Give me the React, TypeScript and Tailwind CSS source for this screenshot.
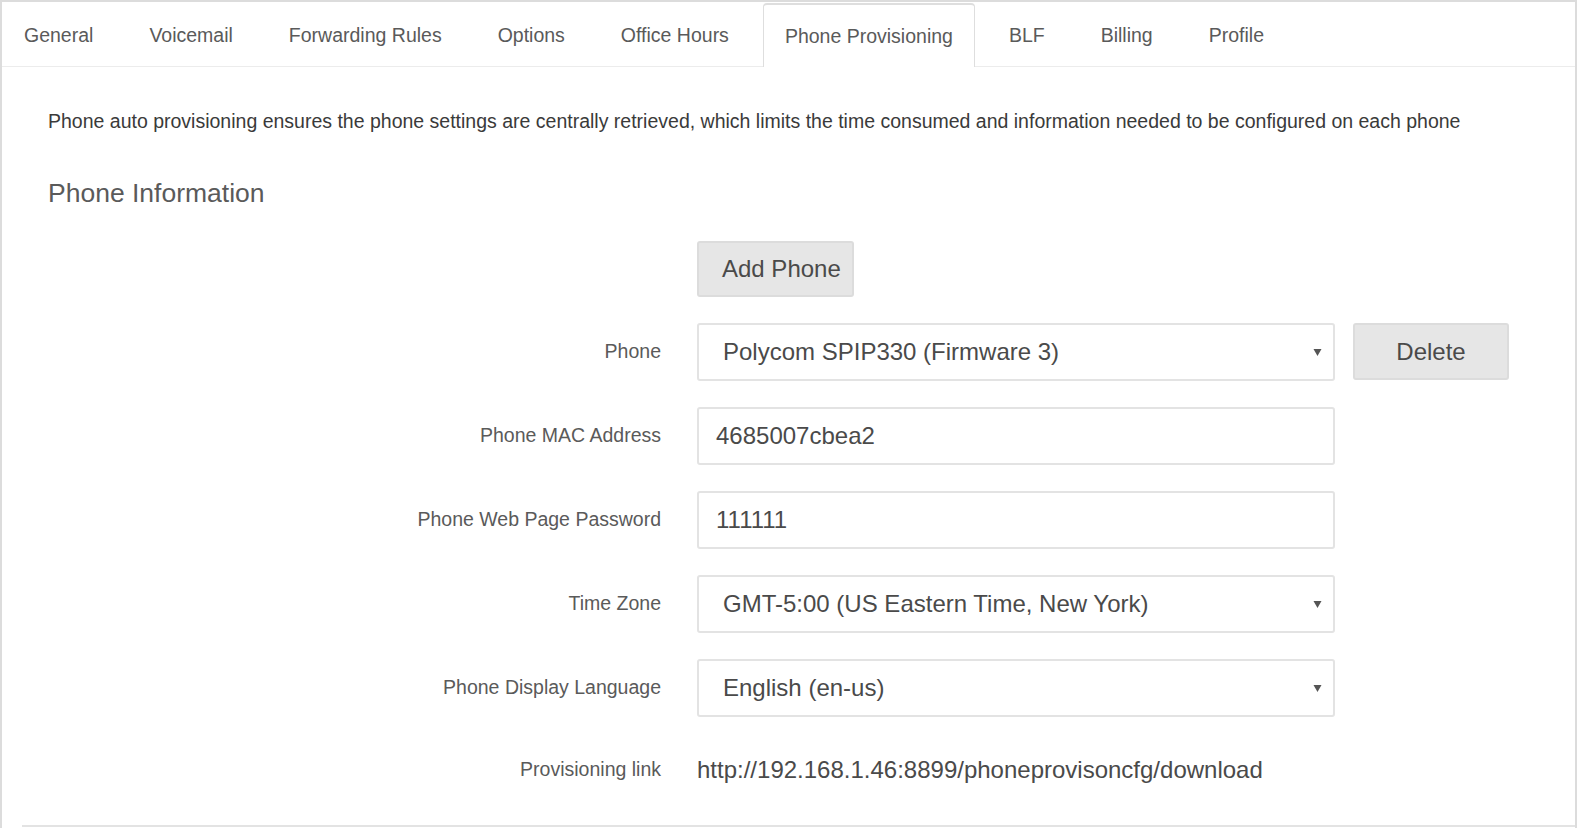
import { useState } from 'react'

const tabs = [
  'General',
  'Voicemail',
  'Forwarding Rules',
  'Options',
  'Office Hours',
  'Phone Provisioning',
  'BLF',
  'Billing',
  'Profile',
]

function Arrow() {
  return (
    <svg width="9" height="9" viewBox="0 0 9 9" className="absolute right-[11px] top-1/2 -translate-y-1/2">
      <path d="M0.5 1.5 H8.5 L4.5 8.5 Z" fill="#555" />
    </svg>
  )
}

function Row({ label, children }: { label: string; children: React.ReactNode }) {
  return (
    <div className="flex items-center">
      <div className="w-[613px] shrink-0 text-right text-[19.5px] text-[#5a5a5a]">{label}</div>
      <div className="ml-[36px] flex items-center">{children}</div>
    </div>
  )
}

function SelectBox({ value }: { value: string }) {
  return (
    <div className="relative flex h-[58px] w-[638px] items-center rounded-[3px] border-2 border-[#e3e3e3] bg-white pl-[24px] text-[24px] text-[#4a4a4a]">
      {value}
      <Arrow />
    </div>
  )
}

function TextBox({ value }: { value: string }) {
  return (
    <div className="flex h-[58px] w-[638px] items-center rounded-[3px] border-2 border-[#e3e3e3] bg-white pl-[17px] text-[24px] text-[#4a4a4a]">
      {value}
    </div>
  )
}

export default function App() {
  const [active, setActive] = useState('Phone Provisioning')

  return (
    <div
      className="flex h-[828px] w-[1577px] flex-col border-x-2 border-t-2 border-[#dcdcdc] bg-white"
      style={{ fontFamily: '"Liberation Sans", Arial, sans-serif' }}
    >
      {/* tabs */}
      <div className="flex h-[65px] shrink-0 items-end gap-[12px] border-b border-[#ececec]">
        {tabs.map((t) => (
          <button
            key={t}
            onClick={() => setActive(t)}
            className={
              t === active
                ? '-mb-px flex h-[64px] items-center rounded-t-[4px] border-x border-t-2 border-[#dedede] bg-white px-[21px] pt-[2px] text-[19.5px] text-[#5a5a5a]'
                : 'flex h-[64px] items-center border-x border-t-2 border-transparent px-[21px] pt-[2px] text-[19.5px] text-[#5a5a5a]'
            }
          >
            {t}
          </button>
        ))}
      </div>

      <div className="flex flex-1 flex-col">
        <p className="mt-[40px] pl-[46px] text-[19.5px] text-[#3a3a3a]">
          Phone auto provisioning ensures the phone settings are centrally retrieved, which limits the time consumed and
          information needed to be configured on each phone
        </p>
        <h3 className="mt-[38px] pl-[46px] text-[26.5px] text-[#5a5a5a]">Phone Information</h3>

        <div className="mt-[27px] flex flex-col gap-[26px] pl-[46px]">
          <div className="flex">
            <div className="ml-[649px] flex h-[56px] w-[157px] items-center rounded-[3px] border-2 border-[#dcdcdc] bg-[#e6e6e6] pl-[23px] text-[24px] text-[#4a4a4a]">
              Add Phone
            </div>
          </div>
          <Row label="Phone">
            <SelectBox value="Polycom SPIP330 (Firmware 3)" />
            <div className="ml-[18px] flex h-[57px] w-[156px] items-center justify-center self-start rounded-[3px] border-2 border-[#dcdcdc] bg-[#e6e6e6] text-[24px] text-[#4a4a4a]">
              Delete
            </div>
          </Row>
          <Row label="Phone MAC Address">
            <TextBox value="4685007cbea2" />
          </Row>
          <Row label="Phone Web Page Password">
            <TextBox value="111111" />
          </Row>
          <Row label="Time Zone">
            <SelectBox value="GMT-5:00 (US Eastern Time, New York)" />
          </Row>
          <Row label="Phone Display Language">
            <SelectBox value="English (en-us)" />
          </Row>
          <div className="flex h-[54px] items-center">
            <div className="w-[613px] shrink-0 text-right text-[19.5px] text-[#5a5a5a]">Provisioning link</div>
            <div className="ml-[36px] text-[24px] text-[#4a4a4a]">http://192.168.1.46:8899/phoneprovisoncfg/download</div>
          </div>
        </div>

        <div className="mt-auto ml-[20px] h-[3px] border-t-2 border-[#e3e3e3]" />
      </div>
    </div>
  )
}
